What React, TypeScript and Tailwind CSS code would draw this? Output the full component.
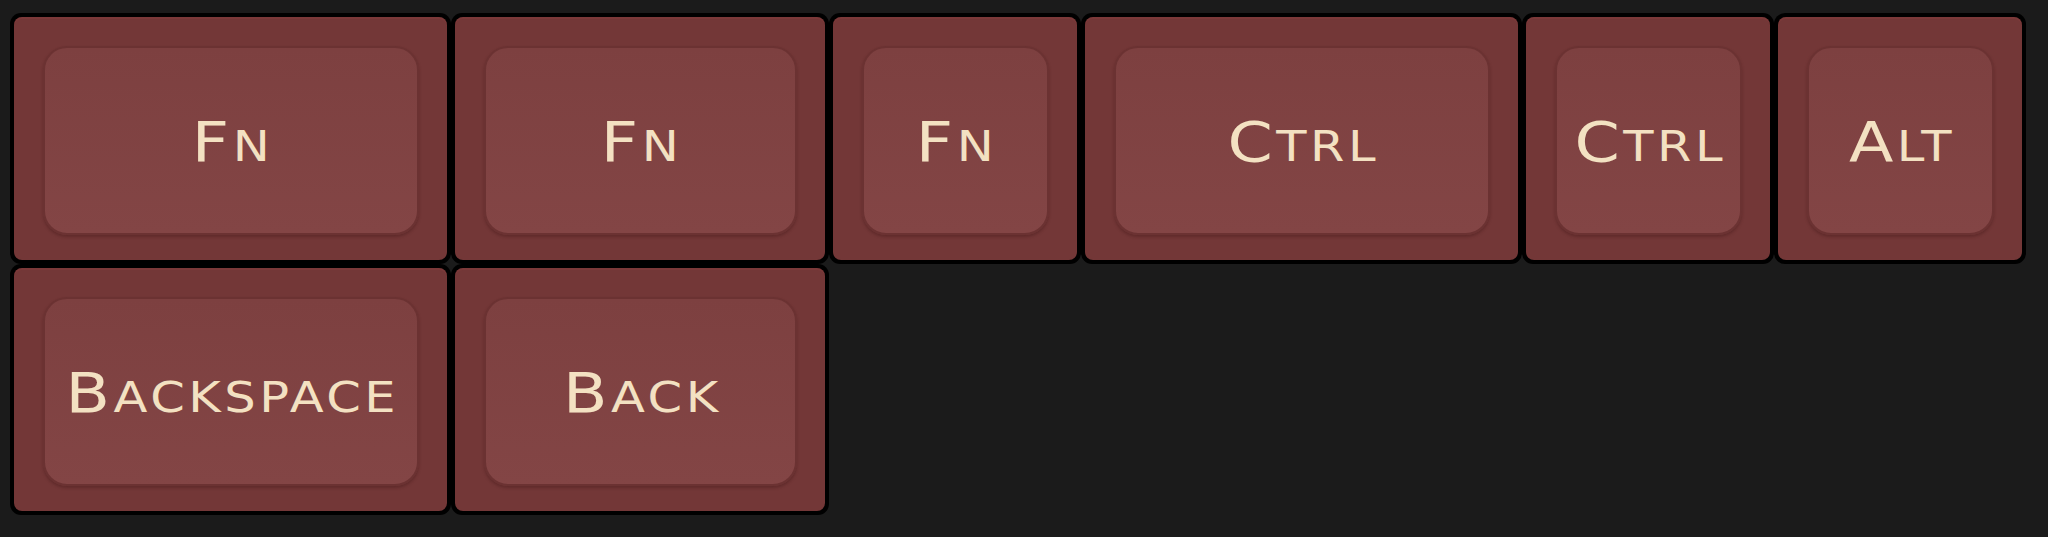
import React from "react";

type KeyDef = { label: string; w: "w175" | "w15" | "w1" };

const widthClass: Record<KeyDef["w"], string> = {
  w175: "w-[441px]",
  w15: "w-[378px]",
  w1: "w-[252px]",
};

const rows: KeyDef[][] = [
  [
    { label: "Fn", w: "w175" },
    { label: "Fn", w: "w15" },
    { label: "Fn", w: "w1" },
    { label: "Ctrl", w: "w175" },
    { label: "Ctrl", w: "w1" },
    { label: "Alt", w: "w1" },
  ],
  [
    { label: "Backspace", w: "w175" },
    { label: "Back", w: "w15" },
  ],
];

function Label({ text }: { text: string }) {
  const first = text.slice(0, 1);
  const rest = text.slice(1);
  return (
    <span className="flex items-baseline leading-none scale-x-[1.18] translate-y-[2px] ml-[3px] tracking-[3px] text-[#f3e1c2] font-['DejaVu_Sans',sans-serif]">
      <span className="text-[55px]">{first}</span>
      <span className="text-[42px] uppercase">{rest}</span>
    </span>
  );
}

function Key({ k }: { k: KeyDef }) {
  return (
    <div
      className={`${widthClass[k.w]} h-[251px] shrink-0 rounded-[11px] bg-black p-[4px]`}
    >
      <div className="h-full w-full rounded-[8px] bg-[#733737] pt-[29px] pl-[29px] pr-[28px] pb-[25px] shadow-[inset_0_2px_0_rgba(140,64,64,0.35)]">
        <div className="flex h-full w-full items-center justify-center rounded-[24px] border-2 border-[#6b3232] bg-gradient-to-b from-[#7d4040] to-[#834545] shadow-[0_2px_3px_rgba(60,20,20,0.35)]">
          <Label text={k.label} />
        </div>
      </div>
    </div>
  );
}

export default function App() {
  return (
    <div className="h-[537px] w-[2048px] bg-[#1b1b1b] pl-[10px] pt-[13px]">
      <div className="flex flex-col">
        {rows.map((row, i) => (
          <div key={i} className="flex">
            {row.map((k, j) => (
              <Key key={j} k={k} />
            ))}
          </div>
        ))}
      </div>
    </div>
  );
}
